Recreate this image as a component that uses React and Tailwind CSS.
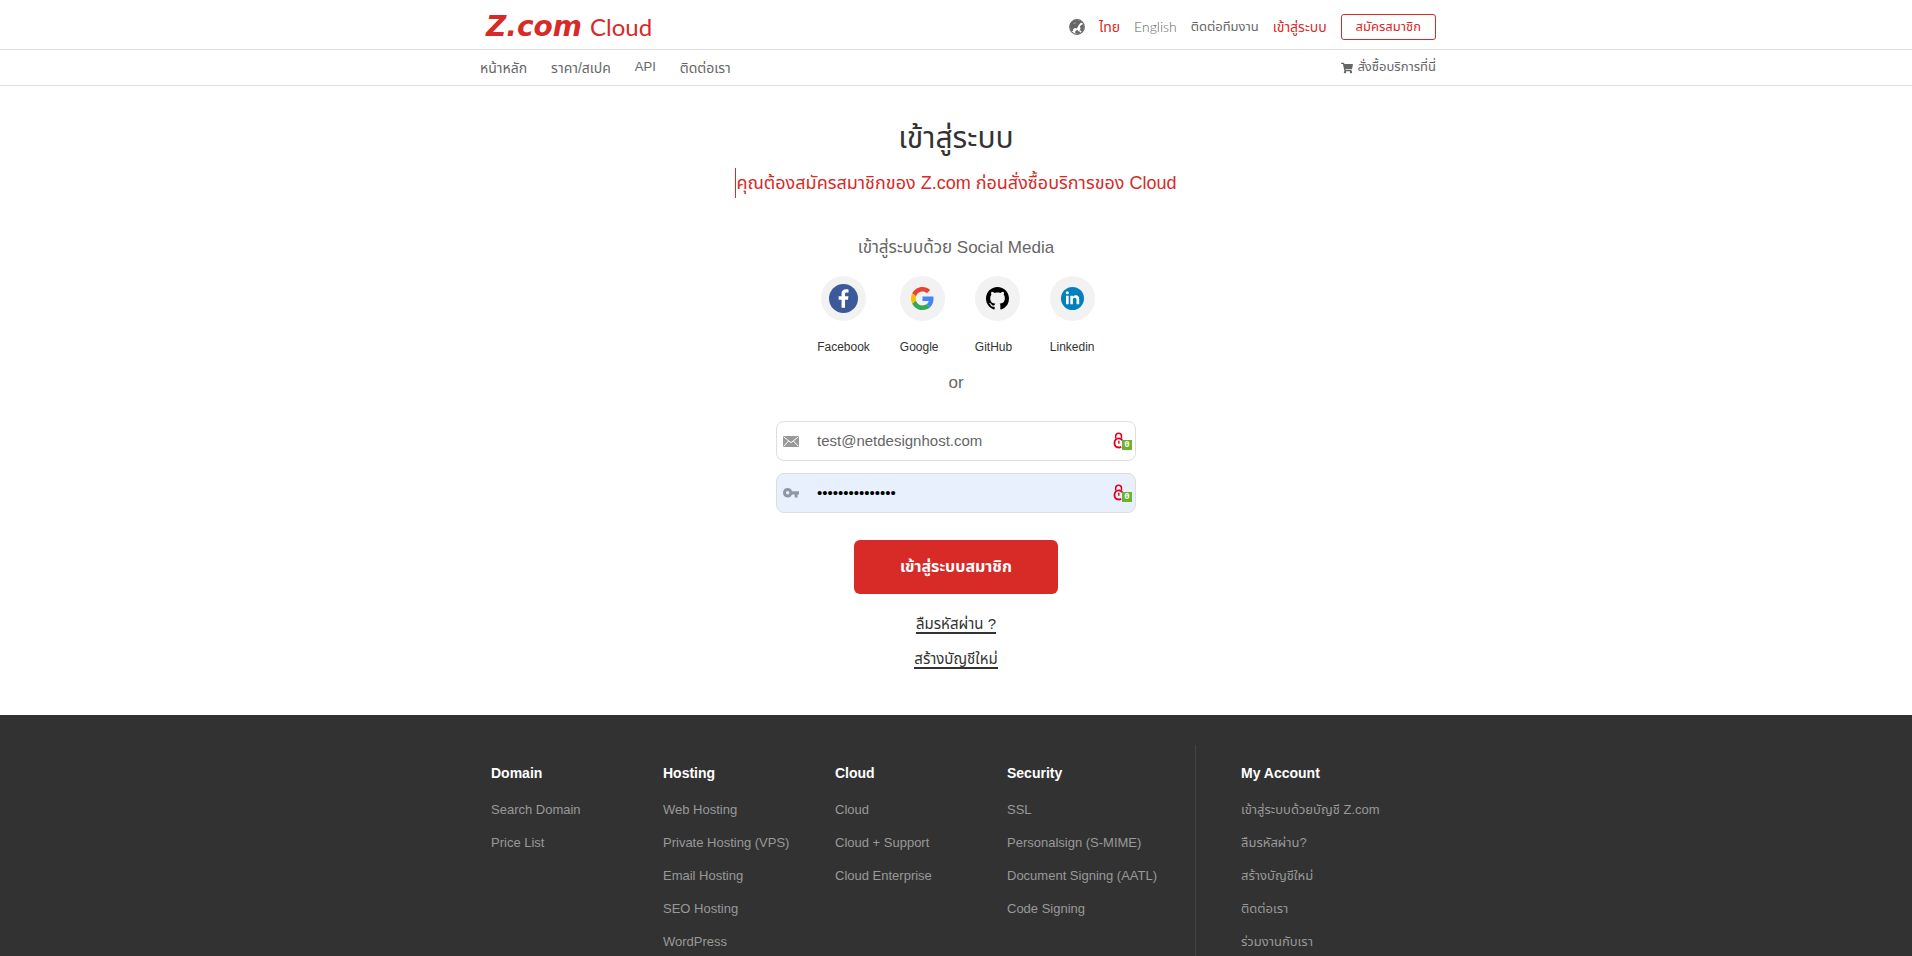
import { FaShoppingCart } from "react-icons/fa";

const SOCIALS = [
  { label: "Facebook", Icon: FacebookIcon },
  { label: "Google", Icon: GoogleIcon },
  { label: "GitHub", Icon: GithubIcon },
  { label: "Linkedin", Icon: LinkedinIcon },
];

const FOOTER_COLUMNS = [
  { title: "Domain", links: ["Search Domain", "Price List"] },
  {
    title: "Hosting",
    links: ["Web Hosting", "Private Hosting (VPS)", "Email Hosting", "SEO Hosting", "WordPress"],
  },
  { title: "Cloud", links: ["Cloud", "Cloud + Support", "Cloud Enterprise"] },
  {
    title: "Security",
    links: ["SSL", "Personalsign (S-MIME)", "Document Signing (AATL)", "Code Signing"],
  },
];

const ACCOUNT_LINKS = [
  "เข้าสู่ระบบด้วยบัญชี Z.com",
  "ลืมรหัสผ่าน?",
  "สร้างบัญชีใหม่",
  "ติดต่อเรา",
  "ร่วมงานกับเรา",
];

function FacebookIcon() {
  return (
    <svg viewBox="0 0 30 30" className="w-[29px] h-[29px]" aria-hidden="true">
      <circle cx="15" cy="15" r="15" fill="#3c5a9a" />
      <path
        d="M16.6 24.5v-8.3h3l.5-3.5h-3.5v-2.1c0-1.1.5-1.7 1.8-1.7h1.8V5.7c-.6-.1-1.5-.2-2.6-.2-2.9 0-4.6 1.6-4.6 4.6v2.6H10v3.5h3v8.3z"
        fill="#fff"
      />
    </svg>
  );
}

function GoogleIcon() {
  return (
    <svg viewBox="0 0 48 48" className="w-[23px] h-[23px]" aria-hidden="true">
      <path fill="#EA4335" d="M24 9.5c3.54 0 6.71 1.22 9.21 3.6l6.85-6.85C35.9 2.38 30.47 0 24 0 14.62 0 6.51 5.38 2.56 13.22l7.98 6.19C12.43 13.72 17.74 9.5 24 9.5z" />
      <path fill="#4285F4" d="M46.98 24.55c0-1.57-.15-3.09-.38-4.55H24v9.02h12.94c-.58 2.96-2.26 5.48-4.78 7.18l7.73 6c4.51-4.18 7.09-10.36 7.09-17.65z" />
      <path fill="#FBBC05" d="M10.53 28.59c-.48-1.45-.76-2.99-.76-4.59s.27-3.14.76-4.59l-7.98-6.19C.92 16.46 0 20.12 0 24s.92 7.54 2.56 10.78l7.97-6.19z" />
      <path fill="#34A853" d="M24 48c6.48 0 11.93-2.13 15.89-5.81l-7.73-6c-2.15 1.45-4.92 2.3-8.16 2.3-6.26 0-11.57-4.22-13.47-9.91l-7.98 6.19C6.51 42.62 14.62 48 24 48z" />
    </svg>
  );
}

function GithubIcon() {
  return (
    <svg viewBox="0 0 16 16" className="w-[23px] h-[23px]" aria-hidden="true">
      <path d="M8 0C3.58 0 0 3.58 0 8c0 3.54 2.29 6.53 5.47 7.59.4.07.55-.17.55-.38 0-.19-.01-.82-.01-1.49-2.01.37-2.53-.49-2.69-.94-.09-.23-.48-.94-.82-1.13-.28-.15-.68-.52-.01-.53.63-.01 1.08.58 1.23.82.72 1.21 1.87.87 2.33.66.07-.52.28-.87.51-1.07-1.78-.2-3.64-.89-3.64-3.95 0-.87.31-1.59.82-2.15-.08-.2-.36-1.02.08-2.12 0 0 .67-.21 2.2.82.64-.18 1.32-.27 2-.27s1.36.09 2 .27c1.53-1.04 2.2-.82 2.2-.82.44 1.1.16 1.92.08 2.12.51.56.82 1.27.82 2.15 0 3.07-1.87 3.75-3.65 3.95.29.25.54.73.54 1.48 0 1.07-.01 1.93-.01 2.2 0 .21.15.46.55.38A8.01 8.01 0 0 0 16 8c0-4.42-3.58-8-8-8z" />
    </svg>
  );
}

function LinkedinIcon() {
  return (
    <svg viewBox="0 0 24 24" className="w-[23px] h-[23px]" aria-hidden="true">
      <circle cx="12" cy="12" r="12" fill="#0080bf" />
      <g fill="#fff">
        <circle cx="6.6" cy="6" r="1.6" />
        <path d="M5.2 9h2.800v9H5.200zM9.700 9h2.700v1.300c.5-.9 1.600-1.600 3-1.600 2.900 0 3.600 1.800 3.600 4.400V18h-2.800v-4.400c0-1.400-.3-2.400-1.700-2.400s-2.100.9-2.100 2.400V18H9.700z" />
      </g>
    </svg>
  );
}

function GlobeIcon() {
  return (
    <svg viewBox="0 0 16 16" className="w-4 h-4" aria-hidden="true">
      <circle cx="8" cy="8" r="7.3" fill="#fff" stroke="#666" strokeWidth="1.2" />
      <path
        fill="#666"
        d="M1 7.500C1 3.600 4.400 1 8 1c2.200 0 4.300.9 5.600 2.600L11.500 4l-2 2.200L8.800 8 7.500 9.500 6 9l-1.500.8L3.800 12l-1 .2C1.600 11 1 9.400 1 7.500zM12.200 6l1.600-.8 1.200 2.600-.8 3.500-1.500 1.700-.7-1.400-1.600-.2 1.200-1.600-.6-2.200zM7 11.500l1.500-.4 1 1.200 1.500.5.3 1.200L9 15l-2.200-.600-.8-1.500z"
      />
      <path d="M3.500 4.500 6 3.200l1.500.6-2 1.200z" fill="#999" />
    </svg>
  );
}

function MailIcon() {
  return (
    <svg viewBox="0 0 16 11" className="w-4 h-[11px]" aria-hidden="true">
      <rect width="16" height="11" fill="#999" />
      <path d="M.5.7 8 6.700 15.500.7M.5 10.400 5.600 5M15.500 10.400 10.400 5" fill="none" stroke="#fff" strokeWidth="1" />
    </svg>
  );
}

function KeyIcon() {
  return (
    <svg viewBox="0 0 16 10" className="w-4 h-[10px]" aria-hidden="true">
      <path
        fill="#8f97a5"
        fillRule="evenodd"
        d="M4.700 0a4.700 4.700 0 0 1 4.400 3.300H16v3.200h-1.400v3h-3v-3H9.100A4.700 4.700 0 1 1 4.700 0zm0 3.100a1.700 1.700 0 1 0 0 3.400 1.700 1.700 0 0 0 0-3.400z"
      />
    </svg>
  );
}

// Password manager badge shown at the right edge of each field
function VaultBadge() {
  return (
    <span className="relative block h-[18px] w-[19px]" aria-hidden="true">
      <svg viewBox="0 0 19 18" className="h-[18px] w-[19px]" fill="none" stroke="#e2001a">
        <path d="M2.700 6.500V4.200a2.800 2.800 0 0 1 5.800 0v2" strokeWidth="1.500" />
        <path d="M9.300 8.500C8.700 7 7.400 6.300 5.800 6.300c-2.500 0-4.300 1.900-4.300 4.700s1.900 4.500 4.300 4.500c.9 0 1.700-.2 2.400-.7" strokeWidth="1.800" />
        <path d="M5.800 8.800v3" strokeWidth="1.400" />
      </svg>
      <span className="absolute right-0 bottom-0 flex h-[10px] w-[10px] items-center justify-center bg-[#6ab42d] font-['Liberation_Mono'] text-[9px] leading-none font-bold text-white">
        0
      </span>
    </span>
  );
}

function Field({ id, label, Icon, filled, ...props }) {
  return (
    <div
      className={`flex h-10 items-center rounded-lg border border-[#ddd] pl-[6px] pr-[3px] ${filled ? "bg-[#e8f0fe] text-black" : "bg-white"}`}
    >
      <label htmlFor={id} className="flex w-[34px] shrink-0 items-center">
        <Icon />
      </label>
      <input
        id={id}
        aria-label={label}
        className="min-w-0 flex-1 bg-transparent text-[15px] outline-none"
        {...props}
      />
      <VaultBadge />
    </div>
  );
}

function FooterColumn({ title, links }) {
  return (
    <div>
      <h3 className="text-sm leading-5 font-bold text-white">{title}</h3>
      <ul className="mt-[17px] flex flex-col gap-[13px]">
        {links.map((link) => (
          <li key={link} className="text-[13px] leading-5">
            <a href="#" className="whitespace-nowrap">{link}</a>
          </li>
        ))}
      </ul>
    </div>
  );
}

export default function App() {
  return (
    <div className="flex min-h-screen flex-col bg-white font-['Liberation_Sans','Noto_Sans_Thai',sans-serif] text-[#666]">
      <header className="text-[13px]">
        <div className="border-b border-[#ddd]">
          <div className="mx-auto flex h-[49px] max-w-[960px] items-center justify-between pt-1 pl-[10px]">
            <a href="#" className="flex items-baseline gap-2 leading-none text-[#d82a27]">
              <span className="font-['DejaVu_Sans'] text-[28px] font-bold italic">Z.com</span>
              <span className="font-['Lato'] text-[24px]">Cloud</span>
            </a>
            <div className="flex items-center gap-[14px]">
              <GlobeIcon />
              <a href="#" className="text-sm text-[#d82a27]">ไทย</a>
              <a href="#" className="font-['Lato'] text-sm font-light">English</a>
              <a href="#">ติดต่อทีมงาน</a>
              <a href="#" className="text-sm text-[#d82a27]">เข้าสู่ระบบ</a>
              <a
                href="#"
                className="flex h-[26px] items-center rounded-[3px] border border-[#d82a27] px-[14px] text-[#d82a27]"
              >
                สมัครสมาชิก
              </a>
            </div>
          </div>
        </div>
        <div className="border-b border-[#ddd]">
          <nav className="mx-auto flex h-[35px] max-w-[960px] items-center gap-6 pl-1 text-sm">
            <a href="#">หน้าหลัก</a>
            <a href="#">ราคา/สเปค</a>
            <a href="#" className="text-[13px]">API</a>
            <a href="#">ติดต่อเรา</a>
            <a href="#" className="ml-auto flex items-center gap-1 text-[13px]">
              <FaShoppingCart className="h-3 w-3" />
              สั่งซื้อบริการที่นี่
            </a>
          </nav>
        </div>
      </header>

      <main className="flex flex-col items-center pb-[46px] pt-8">
        <h1 className="text-[30px] leading-10 text-[#333]">เข้าสู่ระบบ</h1>
        <p className="mt-[10px] border-l border-[#d82a27] text-[18px] leading-[30px] text-[#d82a27]">
          คุณต้องสมัครสมาชิกของ Z.com ก่อนสั่งซื้อบริการของ Cloud
        </p>
        <h2 className="mt-[38px] text-[17px] leading-6">เข้าสู่ระบบด้วย Social Media</h2>

        <div className="mt-4 flex gap-[30px]">
          {SOCIALS.map(({ label, Icon }) => (
            <a key={label} href="#" className="flex min-w-[45px] flex-col items-center text-xs text-[#333]">
              <span className="flex h-[45px] w-[45px] items-center justify-center rounded-full bg-[#f2f2f2]">
                <Icon />
              </span>
              <span className="mt-4 self-start leading-5">{label}</span>
            </a>
          ))}
        </div>

        <p className="mt-[14px] text-[17px] leading-6">or</p>

        <form className="mt-[26px] flex w-[360px] flex-col gap-3" onSubmit={(e) => e.preventDefault()}>
          <Field id="email" label="Email" Icon={MailIcon} type="email" defaultValue="test@netdesignhost.com" />
          <Field
            id="password"
            label="Password"
            Icon={KeyIcon}
            filled
            type="password"
            defaultValue="netdesignhost12"
            autoComplete="current-password"
          />
          <button
            type="submit"
            className="mt-[15px] h-[54px] w-[204px] cursor-pointer self-center rounded-md bg-[#d82a27] text-base font-bold text-white"
          >
            เข้าสู่ระบบสมาชิก
          </button>
        </form>

        <a href="#" className="mt-[22px] border-b-2 border-[#333] text-[15px] leading-4 text-[#333]">
          ลืมรหัสผ่าน ?
        </a>
        <a href="#" className="mt-[17px] border-b-2 border-[#333] text-[15px] leading-4 text-[#333]">
          สร้างบัญชีใหม่
        </a>
      </main>

      <footer className="flex flex-1 bg-[#323232] text-[#999]">
        <div className="mx-auto flex w-full max-w-[960px] pt-[30px]">
          <div className="grid w-[720px] grid-cols-[172px_172px_172px_1fr] border-r border-[#444] pt-[18px] pl-[15px]">
            {FOOTER_COLUMNS.map((col) => (
              <FooterColumn key={col.title} {...col} />
            ))}
          </div>
          <div className="pt-[18px] pl-[45px]">
            <FooterColumn title="My Account" links={ACCOUNT_LINKS} />
          </div>
        </div>
      </footer>
    </div>
  );
}
